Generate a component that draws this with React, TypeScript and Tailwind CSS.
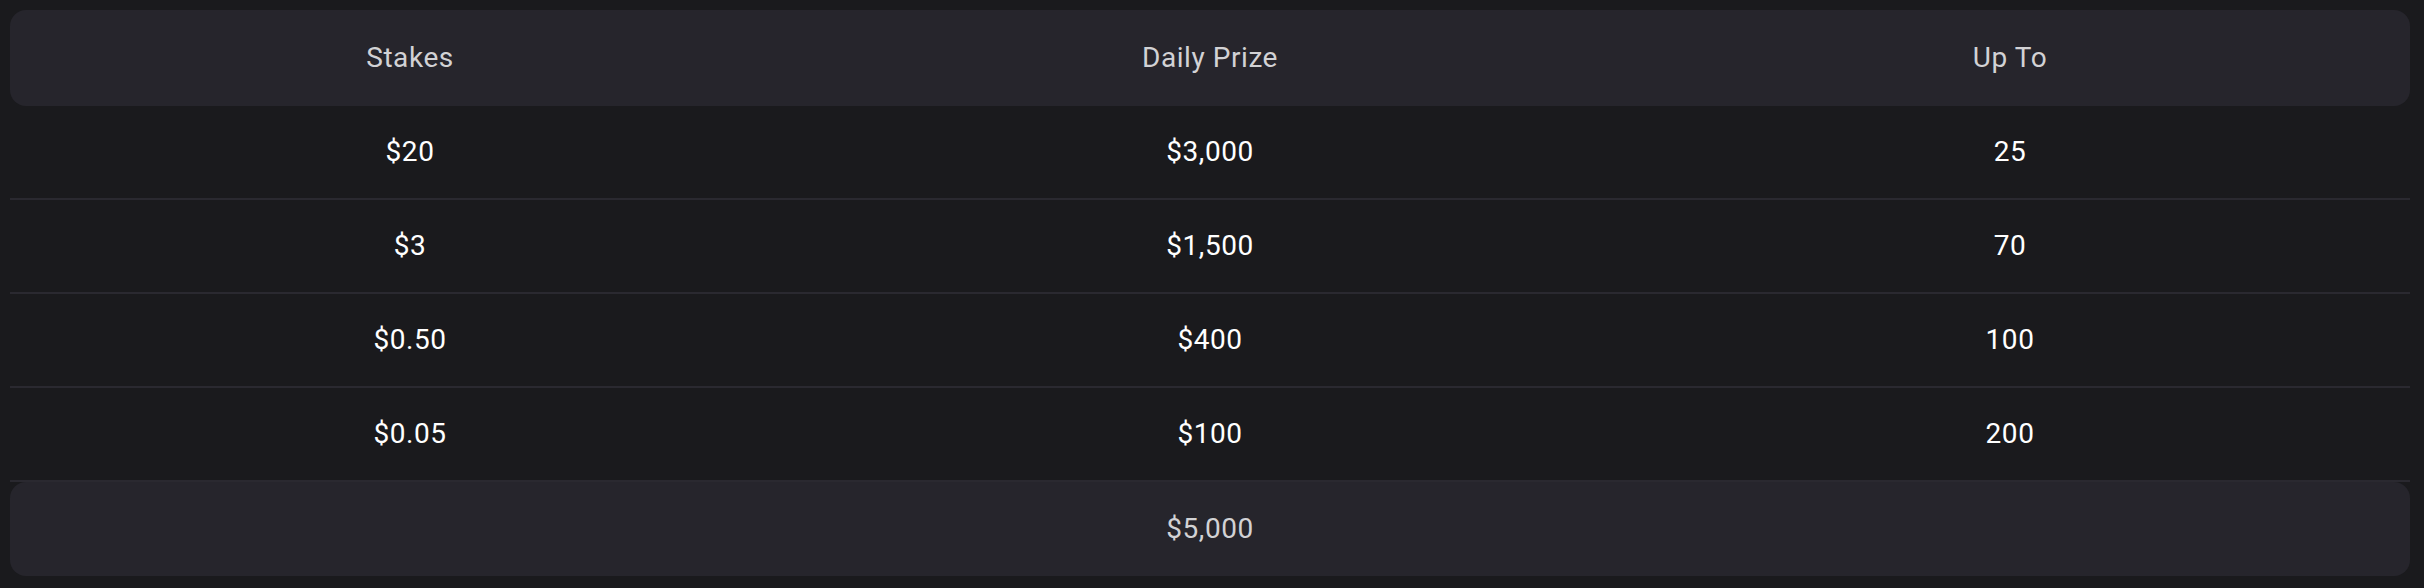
const rows = [
  { stakes: "$20", prize: "$3,000", upTo: "25" },
  { stakes: "$3", prize: "$1,500", upTo: "70" },
  { stakes: "$0.50", prize: "$400", upTo: "100" },
  { stakes: "$0.05", prize: "$100", upTo: "200" },
];

const App = () => {
  return (
    <div className="min-h-screen w-full bg-[#1a1a1d] pt-[10px] pb-[12px] pl-[10px] pr-[14px] font-['Roboto',sans-serif] text-[28px] tracking-[0.02em]">
      <div className="w-full flex flex-col">
        <div className="grid grid-cols-3 h-[96px] items-center rounded-2xl bg-[#26252c] text-[#d2d2d5] text-center">
          <div>Stakes</div>
          <div>Daily Prize</div>
          <div>Up To</div>
        </div>
        {rows.map((r) => (
          <div
            key={r.stakes}
            className="grid grid-cols-3 h-[94px] items-center border-b-2 border-[#2a2930] text-white text-center"
          >
            <div>{r.stakes}</div>
            <div>{r.prize}</div>
            <div>{r.upTo}</div>
          </div>
        ))}
        <div className="grid grid-cols-3 h-[94px] items-center rounded-2xl bg-[#26252c] text-[#d2d2d5] text-center">
          <div />
          <div>$5,000</div>
          <div />
        </div>
      </div>
    </div>
  );
};

export default App;
